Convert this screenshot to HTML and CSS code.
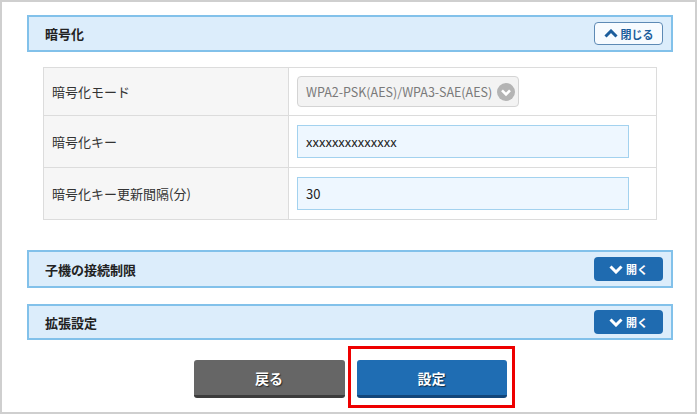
FILE: index.html
```html
<!DOCTYPE html>
<html lang="ja">
<head>
    <meta charset="UTF-8">
    <title>暗号化設定</title>
    <link rel="stylesheet" href="styles.css">
</head>
<body>
<div class="frame">
    <div class="section-head">
        <span class="section-title">暗号化</span>
        <span class="toggle close">
            <svg width="14" height="9" viewBox="0 0 14 9"><path d="M1.5 7.5 L7 2 L12.5 7.5" fill="none" stroke="#1b5d9c" stroke-width="3"/></svg>
            閉じる
        </span>
    </div>

    <table class="settings">
        <tr class="row-first">
            <th>暗号化モード</th>
            <td>
                <div class="select">
                    <span>WPA2-PSK(AES)/WPA3-SAE(AES)</span>
                    <svg width="18" height="18" viewBox="0 0 18 18"><circle cx="9" cy="9" r="9" fill="#b4b4b4"/><path d="M5 7.3 L9 11.3 L13 7.3" fill="none" stroke="#fff" stroke-width="2.6"/></svg>
                </div>
            </td>
        </tr>
        <tr>
            <th>暗号化キー</th>
            <td><div class="input">xxxxxxxxxxxxxx</div></td>
        </tr>
        <tr>
            <th>暗号化キー更新間隔(分)</th>
            <td><div class="input">30</div></td>
        </tr>
    </table>

    <div class="section-head closed">
        <span class="section-title">子機の接続制限</span>
        <span class="toggle open">
            <svg width="14" height="9" viewBox="0 0 14 9"><path d="M1.5 1.5 L7 7 L12.5 1.5" fill="none" stroke="#fff" stroke-width="3"/></svg>
            開く
        </span>
    </div>
    <div class="section-head closed second">
        <span class="section-title">拡張設定</span>
        <span class="toggle open">
            <svg width="14" height="9" viewBox="0 0 14 9"><path d="M1.5 1.5 L7 7 L12.5 1.5" fill="none" stroke="#fff" stroke-width="3"/></svg>
            開く
        </span>
    </div>

    <div class="actions">
        <div class="btn back">戻る</div>
        <div class="btn-wrap">
            <div class="btn submit">設定</div>
            <div class="highlight"></div>
        </div>
    </div>
</div>
</body>
</html>
```

FILE: styles.css
```css
body {
    margin: 0;
    font-family: "Noto Sans CJK JP", "Noto Sans", sans-serif;
    color: #333;
}

.frame {
    width: 697px;
    height: 414px;
    box-sizing: border-box;
    border: 2px solid #cfcfcf;
    padding: 13px 22px 0 25px;
}

.section-head {
    height: 37px;
    box-sizing: border-box;
    border: 2px solid #82c1ea;
    background: #dcedfb;
    display: flex;
    align-items: center;
    justify-content: space-between;
    padding: 0 8px 0 16px;
}
.section-head.closed {
    margin-top: 30px;
    height: 38px;
}
.section-head.second {
    margin-top: 16px;
    height: 36px;
}

.section-title {
    font-size: 13px;
    font-weight: bold;
    color: #222;
}

.toggle {
    width: 69px;
    height: 23px;
    box-sizing: border-box;
    border-radius: 4px;
    display: flex;
    align-items: center;
    justify-content: center;
    gap: 3px;
    font-size: 11px;
    font-weight: bold;
}
.toggle.close {
    background: #f7fbff;
    border: 1px solid #5d8ab5;
    color: #1b5d9c;
}
.toggle.open {
    background: #1f6bb0;
    color: #fff;
    height: 24px;
}

table.settings {
    margin: 15px 0 0 16px;
    width: 614px;
    border-collapse: collapse;
    font-size: 13px;
}
table.settings th {
    width: 245px;
    box-sizing: border-box;
    background: #f6f6f6;
    border: 1px solid #dcdcdc;
    text-align: left;
    font-weight: normal;
    padding: 0 0 0 8px;
    height: 52px;
}
table.settings td {
    border: 1px solid #dcdcdc;
    padding: 0 0 0 8px;
}
table.settings tr.row-first th {
    height: 48px;
}

.select {
    width: 222px;
    height: 31px;
    box-sizing: border-box;
    border: 1px solid #d4d4d4;
    border-radius: 4px;
    background: #f3f3f3;
    display: flex;
    align-items: center;
    justify-content: space-between;
    padding: 0 3px 0 8px;
    font-size: 12.5px;
    color: #7a7a7a;
}

.input {
    width: 332px;
    height: 33px;
    box-sizing: border-box;
    border: 1px solid #a3d2ef;
    background: #eef7ff;
    display: flex;
    align-items: center;
    padding: 0 8px;
    font-size: 13px;
    color: #222;
}

.actions {
    display: flex;
    justify-content: center;
    gap: 12px;
    margin-top: 20px;
}

.btn {
    width: 151px;
    height: 38px;
    box-sizing: border-box;
    border-radius: 3px;
    display: flex;
    align-items: center;
    justify-content: center;
    font-size: 14px;
    font-weight: bold;
    color: #fff;
    text-shadow: 1px 1px 1px rgba(0, 0, 0, 0.6);
}
.btn.back {
    background: #666;
    border-bottom: 3px solid #3c3c3c;
}
.btn.submit {
    width: 150px;
    background: #1f6db3;
    border-bottom: 3px solid #12467a;
}

.btn-wrap {
    position: relative;
}
.highlight {
    position: absolute;
    left: -9px;
    top: -14px;
    right: -8px;
    bottom: -10px;
    border: 3px solid #ee0000;
}
```
